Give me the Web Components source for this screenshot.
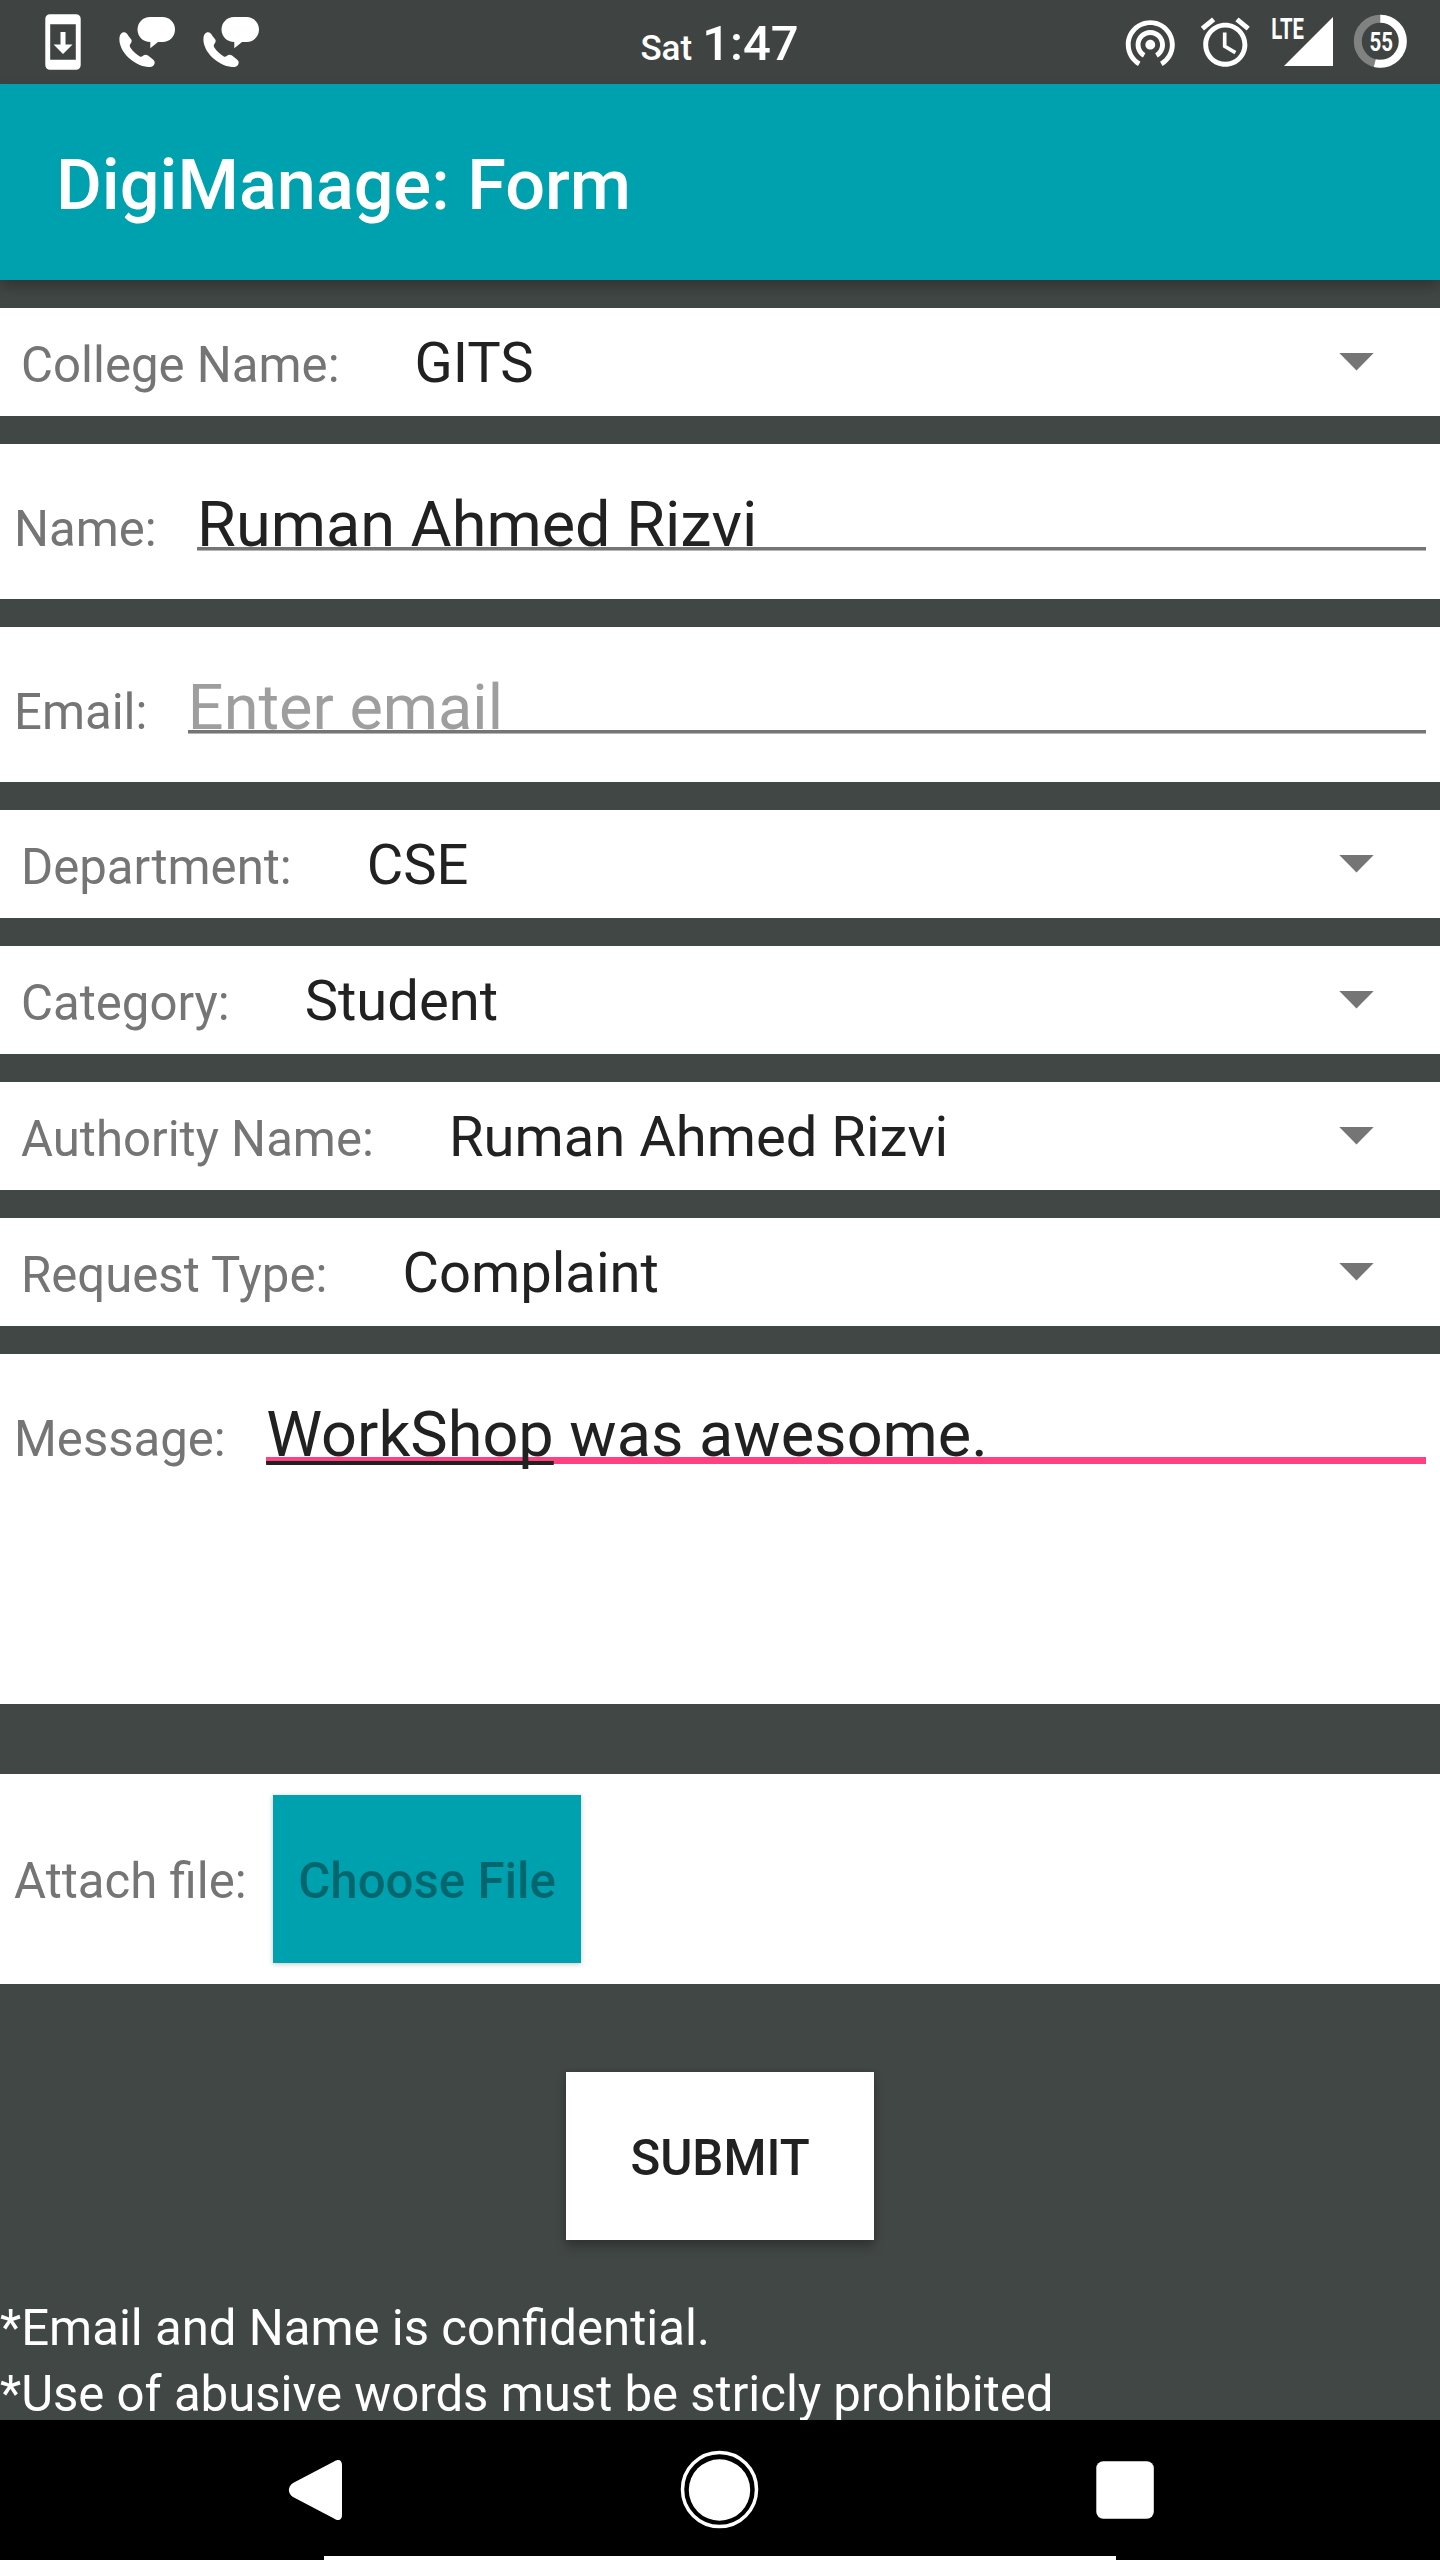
<!DOCTYPE html>
<html lang="en">
<head>
<meta charset="utf-8">
<title>DigiManage: Form</title>
<style>
html,body{margin:0;padding:0}
body{width:1440px;height:2560px;overflow:hidden;background:#414745;font-family:Roboto,"Noto Sans",sans-serif}
</style>
</head>
<body>
<digi-app></digi-app>
<script>
const define = (name, html) => customElements.define(name, class extends HTMLElement {
  constructor() {
    super();
    const t = document.createElement('template');
    t.innerHTML = html;
    this.attachShadow({ mode: 'open' }).append(t.content.cloneNode(true));
  }
});

define('call-icon', `
<style>:host{display:block;width:56px;height:84px}svg{display:block}</style>
<svg width="56" height="84" viewBox="119 0 56 84" fill="#fff">
  <path d="M150 17h12.500c7 0 12.500 5.500 12.500 12.500S169.500 42 162.500 42h-4.500L150.300 48.300V42C143 42 137.500 36.500 137.500 29.500S143 17 150 17z"/>
  <path d="M119.400 39.500C119.400 34.500 121.500 32.300 124 32.300C126 32.300 127 33.500 128.500 36L131.300 39.500C132.300 41 131.300 42.500 130.300 44C129.500 45.500 129.600 46.500 130.500 47.800C133 51.500 136.500 54.500 139.800 56.500C141 57.200 142 56.700 143 55.800C144.500 54.700 146.300 54.500 148 55.600L153 59.500C154.800 61 155.200 62.500 154.200 64.500C153 66.600 151 67.200 148 67C133 65.500 119.400 51.500 119.400 39.500z"/>
</svg>`);

define('status-bar', `
<style>
:host{display:grid;grid-template-columns:1fr auto 1fr;height:84px;flex-shrink:0;background:#3f4443;color:#fff}
.left{display:flex;padding-left:45px}
.left call-icon{margin-left:38px}
.left call-icon+call-icon{margin-left:28px}
.clock{display:flex;align-items:baseline;gap:10px;font-weight:500;line-height:58px;padding-top:15px;padding-right:1px;white-space:nowrap}
.day{font-size:35px}.time{font-size:49px}
.right{display:flex;justify-content:flex-end;padding-right:32px}
svg{display:block}
text{font-family:Roboto,sans-serif;font-weight:700}
</style>
<div class="left">
  <svg width="36" height="84" viewBox="45 0 36 84" fill="#fff"><path fill-rule="evenodd" d="M50 14.200h26a4.600 4.600 0 0 1 4.700 4.700v46.200a4.600 4.600 0 0 1-4.700 4.700H50a4.600 4.600 0 0 1-4.700-4.700V18.900a4.600 4.600 0 0 1 4.700-4.700zM50.200 24.300v35.500h25.600V24.300z"/><path d="M60.500 32h5v12.400h7L63 54l-9.400-9.600h6.900z"/></svg>
  <call-icon></call-icon><call-icon></call-icon>
</div>
<div class="clock"><span class="day">Sat</span><span class="time">1:47</span></div>
<div class="right">
  <svg width="288" height="84" viewBox="1120 0 288 84" fill="#fff">
    <g transform="translate(1120.900 12.850) scale(2.450)"><path d="M12 11c-1.100 0-2 .9-2 2s.9 2 2 2 2-.9 2-2-.9-2-2-2zm6 2c0-3.310-2.690-6-6-6s-6 2.690-6 6c0 2.220 1.210 4.150 3 5.190l1-1.740c-1.190-.7-2-1.970-2-3.450 0-2.210 1.790-4 4-4s4 1.790 4 4c0 1.480-.81 2.750-2 3.450l1 1.740c1.790-1.040 3-2.970 3-5.190zM12 3C6.480 3 2 7.480 2 13c0 3.700 2.010 6.920 4.990 8.650l1-1.730C5.610 18.530 4 15.960 4 13c0-4.420 3.580-8 8-8s8 3.580 8 8c0 2.960-1.610 5.530-4 6.920l1 1.730c2.990-1.730 5-4.950 5-8.650 0-5.520-4.480-10-10-10z"/></g>
    <g transform="translate(1195.900 12.850) scale(2.450)"><path d="M22 5.720l-4.600-3.860-1.290 1.530 4.600 3.860L22 5.720zM7.880 3.390L6.600 1.860 2 5.710l1.290 1.530 4.590-3.850zM12.500 8H11v6l4.750 2.850.75-1.230-4-2.370V8zM12 4c-4.970 0-9 4.030-9 9s4.020 9 9 9c4.970 0 9-4.030 9-9s-4.030-9-9-9zm0 16c-3.870 0-7-3.130-7-7s3.130-7 7-7 7 3.130 7 7-3.130 7-7 7z"/></g>
    <path d="M1284 66h49V17z"/>
    <text transform="translate(1271.300 39) scale(.7 1)" font-size="29">LTE</text>
    <circle cx="1380.300" cy="41.300" r="22.500" fill="none" stroke="#7f8281" stroke-width="8"/>
    <circle cx="1380.300" cy="41.300" r="22.500" fill="none" stroke="#fff" stroke-width="8" pathLength="100" stroke-dasharray="54 46" transform="rotate(-90 1380.300 41.300)"/>
    <text transform="translate(1381.300 51) scale(.82 1)" font-size="25" text-anchor="middle">55</text>
  </svg>
</div>`);

define('app-bar', `
<style>
:host{display:flex;align-items:center;flex-shrink:0;box-sizing:border-box;height:196px;padding:5px 56px 0;background:#00a1af;color:#fff;
font-size:70.25px;font-weight:500;white-space:nowrap;box-shadow:0 7px 14px rgba(0,0,0,.26);position:relative}
</style><slot></slot>`);

define('spinner-row', `
<style>
:host{display:flex;align-items:baseline;flex-shrink:0;box-sizing:border-box;height:108px;padding:22px 66px 0 21px;background:#fff;white-space:nowrap}
.label{font-size:49.14px;line-height:66px;color:#757575}
.value{flex:1;margin-left:75px;font-size:56.15px;line-height:66px;color:#212121}
svg{display:block;align-self:flex-start;margin-top:23px}
</style>
<span class="label"><slot name="label"></slot></span>
<span class="value"><slot></slot></span>
<svg width="35" height="18" viewBox="0 0 35 18"><path d="M.3 0h34.400L17.500 17.500z" fill="#757575"/></svg>`);

define('text-row', `
<style>
:host{display:flex;align-items:baseline;flex-shrink:0;box-sizing:border-box;height:155px;padding:44px 14px 0 14px;background:#fff;white-space:nowrap;
--line:linear-gradient(#757575 0 3px,#b5b5b5 3px 4px);--thick:4px}
:host([multiline]){height:350px;--line:linear-gradient(#ff4081,#ff4081);--thick:7px}
.label{font-size:49.1px;line-height:74px;color:#757575}
.value{flex:1;margin-left:40.4px;font-size:63px;line-height:74px;color:#212121;
background:var(--line) 0 59px/100% var(--thick) no-repeat}
:host([hint]) .value{color:#9e9e9e}
</style>
<span class="label"><slot name="label"></slot></span>
<span class="value"><slot></slot></span>`);

define('raised-button', `
<style>
:host{display:flex;align-items:center;justify-content:center;flex-shrink:0;box-sizing:border-box;width:308px;height:168px;padding-top:3px;
background:#fff;color:#212121;font-size:49.2px;font-weight:500;line-height:58px;white-space:nowrap;
box-shadow:0 7px 10px rgba(0,0,0,.24),0 0 5px rgba(0,0,0,.14)}
:host([disabled]){background:#00a1af;color:#00676f;box-shadow:0 1px 5px rgba(0,0,0,.24)}
</style><slot></slot>`);

define('attach-row', `
<style>
:host{display:flex;align-items:center;flex-shrink:0;box-sizing:border-box;height:210px;padding:0 14px;background:#fff;white-space:nowrap}
.label{font-size:49.14px;line-height:58px;padding-top:3px;color:#757575}
raised-button{margin-left:26.500px}
</style>
<span class="label"><slot name="label"></slot></span><raised-button disabled><slot></slot></raised-button>`);

define('nav-bar', `
<style>:host{display:block;height:140px;flex-shrink:0;background:#000}svg{display:block}</style>
<svg width="1440" height="140" viewBox="0 2420 1440 140" fill="#fff">
  <path d="M334 2461.500C338.500 2458.500 342 2460 342 2465V2515C342 2520 338.500 2521.500 334 2518.500L293 2497C287.500 2493 287.500 2487 293 2483z"/>
  <circle cx="719.500" cy="2489.500" r="37" fill="none" stroke="#fff" stroke-width="3.500"/>
  <circle cx="719.500" cy="2490" r="30.700"/>
  <rect x="1096.300" y="2461.300" width="57.500" height="57.500" rx="7"/>
  <rect x="324" y="2556" width="792" height="4"/>
</svg>`);

define('digi-app', `
<style>
:host{display:flex;flex-direction:column;width:1440px;height:2560px;overflow:hidden;background:#414745}
main{display:flex;flex-direction:column;gap:28px;padding-top:28px;flex:1;min-height:0;overflow:hidden}
attach-row{margin-top:42px}
main>raised-button{align-self:center;margin-top:60px}
.notes{color:#fff;font-size:49.14px;line-height:66px;margin-top:27px;white-space:nowrap;flex-shrink:0}
.notes p{margin:0}
u{text-decoration:underline 4px #212121;text-underline-offset:5px;text-decoration-skip-ink:none}
</style>
<status-bar></status-bar>
<app-bar>DigiManage: Form</app-bar>
<main>
<spinner-row><span slot="label">College Name:</span>GITS</spinner-row>
<text-row><span slot="label">Name:</span>Ruman Ahmed Rizvi</text-row>
<text-row hint><span slot="label">Email:</span>Enter email</text-row>
<spinner-row><span slot="label">Department:</span>CSE</spinner-row>
<spinner-row><span slot="label">Category:</span>Student</spinner-row>
<spinner-row><span slot="label">Authority Name:</span>Ruman Ahmed Rizvi</spinner-row>
<spinner-row><span slot="label">Request Type:</span>Complaint</spinner-row>
<text-row multiline><span slot="label">Message:</span><u>WorkShop</u> was awesome.</text-row>
<attach-row><span slot="label">Attach file:</span>Choose File</attach-row>
<raised-button>SUBMIT</raised-button>
<div class="notes"><p>*Email and Name is confidential.</p><p>*Use of abusive words must be stricly prohibited</p></div>
</main>
<nav-bar></nav-bar>`);
</script>
</body>
</html>
